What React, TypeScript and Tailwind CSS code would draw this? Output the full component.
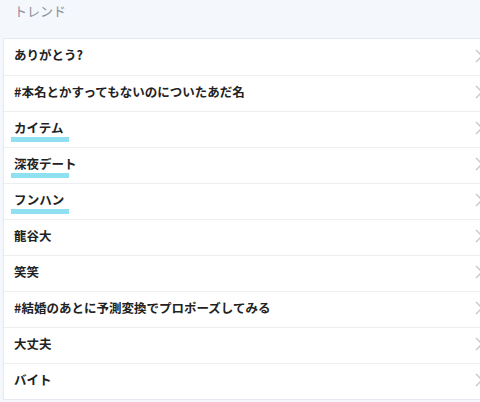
const trends = [
  { label: 'ありがとう?', mark: false },
  { label: '#本名とかすってもないのについたあだ名', mark: false },
  { label: 'カイテム', mark: true },
  { label: '深夜デート', mark: true },
  { label: 'フンハン', mark: true },
  { label: '龍谷大', mark: false },
  { label: '笑笑', mark: false },
  { label: '#結婚のあとに予測変換でプロポーズしてみる', mark: false },
  { label: '大丈夫', mark: false },
  { label: 'バイト', mark: false },
];

function Chevron() {
  return (
    <svg width="9" height="14" viewBox="0 0 9 14" fill="none" className="shrink-0">
      <path d="M1 1l6 6-6 6" stroke="#c4c7cc" strokeWidth="1.3" />
    </svg>
  );
}

export default function App() {
  return (
    <div
      className="w-[480px] h-[402px] overflow-hidden bg-[#f4f7fc]"
      style={{ fontFamily: '"Noto Sans CJK JP", "Noto Sans", sans-serif' }}
    >
      <div className="h-[38px] pl-[14px] pt-[1px] text-[13px] text-[#8a8f98]">トレンド</div>
      <div className="ml-[3px] w-[490px] bg-white border border-[#e6e9f0]">
        {trends.map((t, i) => (
          <div
            key={i}
            className={`relative h-[36px] flex items-center pr-[8px] pb-[3px] ${i > 0 ? 'border-t border-[#eceef2]' : ''}`}
          >
            <span className="flex-1 pl-[10px] text-[12.5px] font-bold text-[#222]">{t.label}</span>
            {t.mark && (
              <div className="absolute left-[7px] top-[25px] w-[58px] h-[5px] bg-[#8fe1f1]" />
            )}
            <Chevron />
          </div>
        ))}
      </div>
    </div>
  );
}
